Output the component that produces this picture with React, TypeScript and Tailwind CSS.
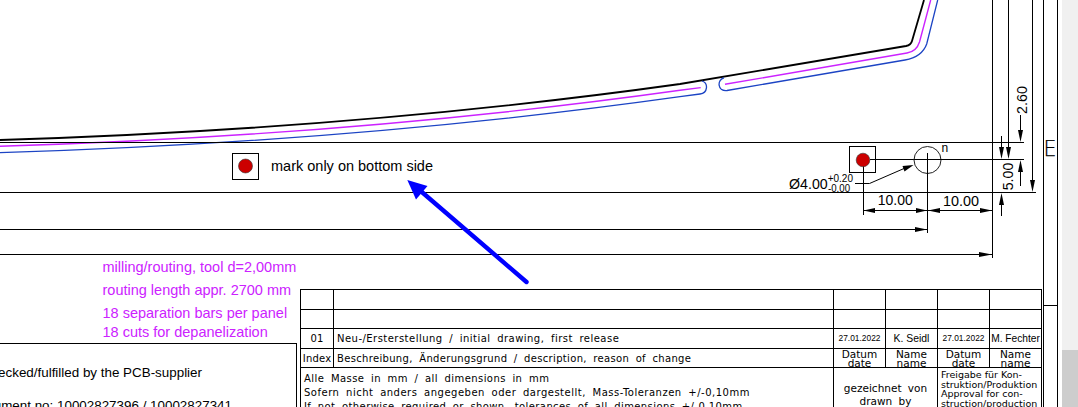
import React from "react";

const SANS = "font-['Liberation_Sans',Arial,sans-serif]";
const CAD = "font-['DejaVu_Sans',sans-serif] font-normal";

function Arrow({ points }: { points: string }) {
  return <polygon points={points} fill="#000" />;
}

function Drawing() {
  return (
    <svg className="absolute inset-0" width="1062" height="407" viewBox="0 0 1062 407" fill="none">
      {/* board outline */}
      <path d="M0 140 C227 133 453 115.8 680 84 L906 46 Q911 45 912 41 L924 0" stroke="#000" strokeWidth="1.8" />
      <path d="M0 146.3 C227 139.3 453 122.1 680 90.3 L700.7 87.6" stroke="#cc22ff" strokeWidth="1.4" />
      <path d="M725 84.3 L907 53 Q916.5 51.5 919.5 42 L930.7 0" stroke="#cc22ff" strokeWidth="1.4" />
      <path d="M0 152.7 C227 145.7 453 128.5 680 96.7 L700 94 C708 93 708.5 83 702 81" stroke="#1c44c4" strokeWidth="1.3" />
      <path d="M724 77.8 C717 79.5 717 91.5 727 90.5 L905 60 Q922 57 926.7 44 L937.7 0" stroke="#1c44c4" strokeWidth="1.3" />

      {/* extension lines */}
      <g stroke="#000" strokeWidth="1">
        <path d="M0 142.5 H1024" />
        <path d="M870 159.5 H1024" />
        <path d="M0 192.5 H1036" />
        <path d="M0 229.5 H927" />
        <path d="M0 254.5 H992" />
        <path d="M863.5 166 V215" />
        <path d="M927.5 153 V233" />
        <path d="M992.5 0 V258" />
        <path d="M1008.5 0 V150" />
        <path d="M1032.5 0 V182" />
        <path d="M1043.5 0 V407" />
        <path d="M1057.5 0 V407" />
        <path d="M1043 305.5 H1057" />
        <path d="M1020.5 115 V132" />
        <path d="M1020.5 168 V186" />
        <path d="M1001.5 136 V150" />
        <path d="M1001.5 204 V216" />
        <path d="M863 210.5 H992" />
      </g>

      {/* arrow heads */}
      <Arrow points="863.5,210.5 875,208 875,213" />
      <Arrow points="927,210.5 916,208 916,213" />
      <Arrow points="928,210.5 940,208 940,213" />
      <Arrow points="992,210.5 980,208 980,213" />
      <Arrow points="927,229.5 915,227 915,232" />
      <Arrow points="992,254.5 979,252 979,257" />
      <Arrow points="1020.5,142 1018,130 1023,130" />
      <Arrow points="1020.5,160 1018,172 1023,172" />
      <Arrow points="1001.5,159 999,147 1004,147" />
      <Arrow points="1008.5,159 1006,147 1011,147" />
      <Arrow points="1032.5,192 1030,180 1035,180" />
      <Arrow points="1001.5,193 999,205 1004,205" />

      {/* marks */}
      <rect x="232.5" y="153.5" width="26" height="26" stroke="#000" strokeWidth="1" fill="#fff" />
      <circle cx="245.5" cy="166" r="7" fill="#cc0000" stroke="#333" strokeWidth="0.6" />
      <rect x="849.5" y="146.5" width="26" height="26" stroke="#000" strokeWidth="1" fill="#fff" />
      <path d="M870 159.5 H876" stroke="#000" strokeWidth="1" />
      <path d="M863.5 166 V172" stroke="#000" strokeWidth="1" />
      <circle cx="863" cy="160" r="6.8" fill="#cc0000" stroke="#333" strokeWidth="0.6" />
      <circle cx="927.5" cy="160" r="13.5" fill="#fff" stroke="#222" strokeWidth="1" />
      <path d="M927.5 153 V174 M914 159.5 H942" stroke="#000" strokeWidth="1" />

      {/* diameter leader */}
      <path d="M855 183.5 H869.5 L904 168.5" stroke="#000" strokeWidth="1" />
      <Arrow points="913.5,165 902.5,166 904.5,171.5" />

      {/* dimension labels */}
      <g className={SANS} fill="#000">
        <text x="789" y="189" fontSize="15.5" textLength="38.7" lengthAdjust="spacingAndGlyphs">Ø4.00</text>
        <text x="827.7" y="181.5" fontSize="10.5" textLength="25.3" lengthAdjust="spacingAndGlyphs">+0.20</text>
        <text x="828" y="192" fontSize="10.5" textLength="22" lengthAdjust="spacingAndGlyphs">-0.00</text>
        <text x="877.7" y="205" fontSize="15.5" textLength="35" lengthAdjust="spacingAndGlyphs">10.00</text>
        <text x="943" y="206" fontSize="15.5" textLength="36" lengthAdjust="spacingAndGlyphs">10.00</text>
        <text x="941.5" y="152" fontSize="12">n</text>
        <text transform="translate(1026.5 114) rotate(-90)" fontSize="15.5" textLength="28" lengthAdjust="spacingAndGlyphs">2.60</text>
        <text transform="translate(1012.5 190.3) rotate(-90)" fontSize="15.5" textLength="27.7" lengthAdjust="spacingAndGlyphs">5.00</text>
      </g>
      <text x="1043.6" y="156" fontSize="20.5" fill="#000" stroke="#000" strokeWidth="0.25" className="font-['DejaVu_Sans',sans-serif] font-extralight">E</text>

      {/* callout arrow */}
      <path d="M526.5 282 L416 187" stroke="#0000ff" strokeWidth="4.4" strokeLinecap="round" />
      <polygon points="407.3,180 427.5,186 416,199.5" fill="#0000ff" />
    </svg>
  );
}

function Cell({ className = "", children }: { className?: string; children?: React.ReactNode }) {
  return <div className={`border-r border-b border-black overflow-hidden ${className}`}>{children}</div>;
}

function TitleBlock() {
  const small = `${SANS} text-[8.4px] text-black flex items-center justify-center`;
  const cad = `${CAD} text-[10px] text-black [word-spacing:3px] whitespace-pre`;
  const stacked = `${CAD} text-[10.5px] leading-[8.5px] text-black text-center pt-[1px]`;
  return (
    <div className="w-[742px] border-t border-l border-black">
      <div className="grid grid-cols-[33px_500px_52px_52px_52px_52px] grid-rows-[20px_19px_20px_19px]">
        <Cell /><Cell /><Cell /><Cell /><Cell /><Cell />
        <Cell /><Cell /><Cell /><Cell /><Cell /><Cell />
        <Cell className={`${cad} tracking-[0.2px] flex items-center justify-center`}>01</Cell>
        <Cell className={`${cad} tracking-[0.47px] flex items-center pl-[3px]`}>Neu-/Ersterstellung / initial drawing, first release</Cell>
        <Cell className={small}>27.01.2022</Cell>
        <Cell className={`${SANS} text-[10.4px] flex items-center justify-center`}>K. Seidl</Cell>
        <Cell className={small}>27.01.2022</Cell>
        <Cell className={`${SANS} text-[10.2px] flex items-center justify-center whitespace-nowrap`}>M. Fechter</Cell>
        <Cell className={`${cad} tracking-[0.2px] flex items-center justify-center`}>Index</Cell>
        <Cell className={`${cad} tracking-[0.33px] flex items-center pl-[3px]`}>Beschreibung, Änderungsgrund / description, reason of change</Cell>
        <Cell className={stacked}>Datum<br />date</Cell>
        <Cell className={stacked}>Name<br />name</Cell>
        <Cell className={stacked}>Datum<br />date</Cell>
        <Cell className={stacked}>Name<br />name</Cell>
      </div>
      <div className="grid grid-cols-[533px_104px_104px] h-[60px]">
        <Cell className={`${cad} pl-[3px] pt-[4px] leading-[14px]`}>
          <p className="tracking-[0.43px]">Alle Masse in mm / all dimensions in mm</p>
          <p className="tracking-[0.5px]">Sofern nicht anders angegeben oder dargestellt, Mass-Toleranzen +/-0,10mm</p>
          <p className="tracking-[0.4px]">If not otherwise required or shown, tolerances of all dimensions +/-0,10mm</p>
        </Cell>
        <Cell className={`${CAD} text-[10.5px] leading-[13px] text-center pt-[14px] [word-spacing:3px]`}>
          <p>gezeichnet von</p>
          <p>drawn by</p>
        </Cell>
        <Cell className={`${CAD} text-[9.5px] leading-[9.7px] pl-[3px] pt-[2px] whitespace-nowrap`}>
          <p>Freigabe für Kon-</p>
          <p>struktion/Produktion</p>
          <p>Approval for con-</p>
          <p>struction/production</p>
        </Cell>
      </div>
    </div>
  );
}

export default function App() {
  return (
    <div className="flex w-[1078px] h-[407px] overflow-hidden bg-white">
      <main className="relative flex-1 h-full overflow-hidden pl-[300px] pt-[289px]">
        <Drawing />

        <span className={`${SANS} absolute left-[271px] top-[157px] text-[14.5px] leading-[18px] text-black whitespace-nowrap`}>
          mark only on bottom side
        </span>

        <div className={`${SANS} absolute left-[102.5px] top-[256px] text-[14.5px] text-[#cc22ff] whitespace-nowrap`}>
          <p className="leading-[23px]">milling/routing, tool d=2,00mm</p>
          <p className="leading-[23px]">routing length appr. 2700 mm</p>
          <p className="leading-[23px]">18 separation bars per panel</p>
          <p className="leading-[15px]">18 cuts for depanelization</p>
        </div>

        <div className={`${SANS} absolute right-[765px] top-[343px] w-[400px] h-[80px] border-t border-r border-black text-[13.4px] text-black text-right pr-[94px] whitespace-nowrap`}>
          <p className="mt-[20px] leading-[18px]">checked/fulfilled by the PCB-supplier</p>
          <p className="mt-[15px] leading-[18px] mr-[-30px]">document no: 10002827396 / 10002827341</p>
        </div>

        <div className="relative">
          <TitleBlock />
        </div>
      </main>
      <aside className="w-4 h-full bg-[#f0f0f0] flex flex-col justify-end">
        <div className="h-[57px] bg-[#cdcdcd]" />
      </aside>
    </div>
  );
}
